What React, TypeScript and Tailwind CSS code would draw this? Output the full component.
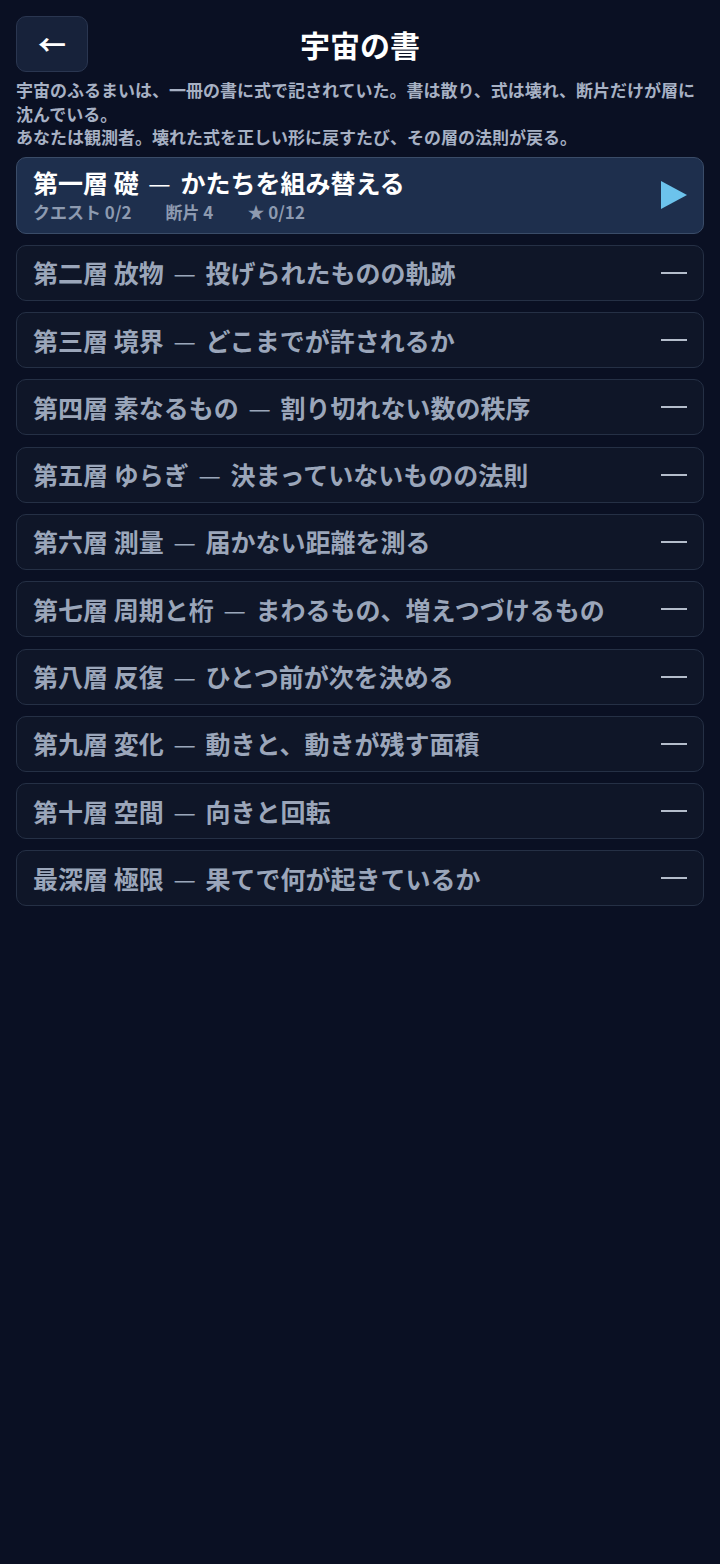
import React from 'react'

const layers = [
  ['第二層 放物', '投げられたものの軌跡'],
  ['第三層 境界', 'どこまでが許されるか'],
  ['第四層 素なるもの', '割り切れない数の秩序'],
  ['第五層 ゆらぎ', '決まっていないものの法則'],
  ['第六層 測量', '届かない距離を測る'],
  ['第七層 周期と桁', 'まわるもの、増えつづけるもの'],
  ['第八層 反復', 'ひとつ前が次を決める'],
  ['第九層 変化', '動きと、動きが残す面積'],
  ['第十層 空間', '向きと回転'],
  ['最深層 極限', '果てで何が起きているか'],
]

const Dash = () => <span className="mx-[4px] font-normal">—</span>

export default function App() {
  return (
    <div
      className="min-h-[1564px] w-[720px] bg-[#0a1023] px-4 pt-4"
      style={{ fontFamily: '"Noto Sans CJK JP", "Noto Sans", sans-serif' }}
    >
      {/* Header */}
      <div className="relative flex h-14 items-center justify-center">
        <button className="absolute left-0 top-0 flex h-14 w-[72px] items-center justify-center rounded-[10px] border border-[#2a3650] bg-[#17223a] text-[28px] font-bold text-white">
          ←
        </button>
        <h1 className="text-[30px] font-bold leading-none text-white">宇宙の書</h1>
      </div>

      <p className="mt-[6px] text-[17px] font-bold leading-[23.5px] text-[#a7b1c4]">
        宇宙のふるまいは、一冊の書に式で記されていた。書は散り、式は壊れ、断片だけが層に沈んでいる。
        <br />
        あなたは観測者。壊れた式を正しい形に戻すたび、その層の法則が戻る。
      </p>

      <div className="mt-[8px] flex flex-col gap-[11.3px]">
        {/* Active layer */}
        <div className="flex h-[77px] items-center justify-between rounded-[10px] border border-[#3a4c68] bg-[#1e2f4d] pl-4 pr-4">
          <div className="flex flex-col">
            <div className="text-[25px] font-bold leading-[28px] text-white">
              第一層 礎 <Dash /> かたちを組み替える
            </div>
            <div className="mt-[6px] flex gap-[34px] text-[17px] font-bold leading-5 text-[#8d9ab0]">
              <span>クエスト 0/2</span>
              <span>断片 4</span>
              <span>★ 0/12</span>
            </div>
          </div>
          <svg width="26" height="28" viewBox="0 0 26 28">
            <polygon points="0,0 26,14 0,28" fill="#6cc3ec" />
          </svg>
        </div>

        {layers.map(([a, b]) => (
          <div
            key={a}
            className="flex h-14 items-center justify-between rounded-[10px] border border-[#253045] bg-[#0f1628] px-4"
          >
            <span className="text-[25px] font-bold leading-none text-[#9ba6ba]">
              {a} <Dash /> {b}
            </span>
            <span className="h-[2px] w-[26px] bg-[#b4bdcb]" />
          </div>
        ))}
      </div>
    </div>
  )
}
